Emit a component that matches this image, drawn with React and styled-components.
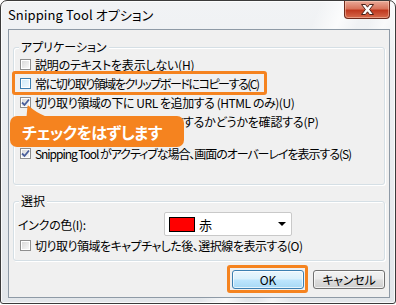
import React from 'react';
import styled, {createGlobalStyle, css} from 'styled-components';

const ORANGE = '#f5831f';

const GlobalStyle = createGlobalStyle`
  html, body {
    margin: 0;
    padding: 0;
    width: 396px;
    height: 305px;
    overflow: hidden;
    background: #ffffff;
  }
  body {
    font-family: "Noto Sans CJK JP", "Noto Sans", sans-serif;
    font-feature-settings: "palt";
    font-size: 12px;
    color: #000;
  }
`;

const Window = styled.div`
  box-sizing: border-box;
  width: 396px;
  height: 304px;
  border: 1px solid #3b3b3b;
  border-radius: 7px 7px 3px 3px;
  display: flex;
  flex-direction: column;
  background:
    linear-gradient(112deg, transparent 62%, rgba(255, 255, 255, 0.75) 67%, transparent 71%, transparent 73%, rgba(255, 255, 255, 0.6) 76%, transparent 80%),
    linear-gradient(#f1f3f5, #e2e6ea);
  box-shadow: inset 0 0 0 1px rgba(255, 255, 255, 0.8);
`;

const TitleBar = styled.div`
  height: 28px;
  display: flex;
  justify-content: space-between;
  align-items: flex-start;
  padding-left: 7px;
`;

const Title = styled.div`
  line-height: 28px;
  font-size: 13px;
  letter-spacing: 0.1px;
`;

const CloseButton = styled.div`
  width: 46px;
  height: 18px;
  margin-right: 5px;
  box-sizing: border-box;
  border: 1px solid #6e2a1c;
  border-top: none;
  border-radius: 0 0 4px 4px;
  background: linear-gradient(#e9a998 0%, #d8745c 45%, #c0391f 55%, #d66a4c 100%);
  box-shadow: inset 0 0 0 1px rgba(255, 220, 200, 0.45);
  display: flex;
  align-items: center;
  justify-content: center;
`;

const Client = styled.div`
  flex: 1;
  margin: 0 5px 5px 7px;
  border: 1px solid #8e9aa6;
  background: #f0f0f0;
  display: flex;
  flex-direction: column;
`;

const Group = styled.div`
  position: relative;
  box-sizing: border-box;
  height: ${p => p.$h}px;
  margin: ${p => p.$top}px 4px 0 4px;
  border: 1px solid #d5dfe5;
  border-radius: 3px;
  box-shadow: inset 1px 1px 0 #fff, 1px 1px 0 #fff;
  padding-top: ${p => p.$pad}px;
`;

const GroupLabel = styled.span`
  position: absolute;
  top: -9px;
  left: 5px;
  padding: 0 2px;
  background: #f0f0f0;
  line-height: 16px;
`;

const Row = styled.label`
  position: relative;
  display: flex;
  align-items: center;
  gap: 3px;
  height: ${p => p.$h || 19}px;
  margin-top: ${p => p.$gap || 0}px;
  padding-left: 6px;
  white-space: nowrap;
  letter-spacing: ${p => (p.$ls != null ? p.$ls : -0.2)}px;
  ${p =>
    p.$highlight &&
    css`
      &::after {
        content: '';
        position: absolute;
        left: -2px;
        top: -3px;
        width: 255px;
        bottom: -2px;
        box-sizing: border-box;
        border: 3px solid ${ORANGE};
        border-radius: 3px;
      }
    `}
`;

const Box = styled.span`
  box-sizing: border-box;
  width: 11px;
  height: 11px;
  flex: none;
  margin-right: 1px;
  border: 1px solid ${p => (p.$hover ? '#3c7fb1' : '#8f8f8f')};
  background: ${p =>
    p.$hover ? 'linear-gradient(135deg, #cde9f8, #f2faff)' : 'linear-gradient(135deg, #d6d6d6, #fbfbfb)'};
  box-shadow: inset 0 0 0 1px #fff;
  display: flex;
  align-items: center;
  justify-content: center;
`;

const Check = ({checked, hover}) => (
  <Box $hover={hover}>
    {checked && (
      <svg width="9" height="9" viewBox="0 0 9 9">
        <path d="M1 4.5 L3.5 7 L8 1.5" fill="none" stroke="#4a5f9b" strokeWidth="1.8" />
      </svg>
    )}
  </Box>
);

const Callout = styled.div`
  position: absolute;
  left: -4px;
  top: 68px;
  width: 174px;
  height: 31px;
  border-radius: 7px;
  background: ${ORANGE};
  color: #fff;
  font-weight: 700;
  font-size: 16px;
  letter-spacing: -0.6px;
  display: flex;
  align-items: center;
  padding-left: 12px;
  box-sizing: border-box;
  z-index: 2;
`;

const CalloutTail = styled.svg`
  position: absolute;
  left: 16px;
  top: -11px;
`;

const InkRow = styled.div`
  display: flex;
  align-items: center;
  height: 24px;
  margin-top: 10px;
  padding-left: 4px;
`;

const InkLabel = styled.span`
  width: 146px;
  letter-spacing: -0.3px;
`;

const Select = styled.div`
  box-sizing: border-box;
  width: 128px;
  height: 24px;
  border: 1px solid #c9c9c9;
  border-radius: 2px;
  background: #fff;
  display: flex;
  align-items: center;
  padding: 0 5px 0 4px;
  gap: 4px;
`;

const Swatch = styled.span`
  box-sizing: border-box;
  width: 26px;
  height: 15px;
  background: ${p => p.$color};
  border: 1px solid #000;
`;

const SelectText = styled.span`
  flex: 1;
  font-size: 13px;
`;

const Arrow = styled.span`
  width: 0;
  height: 0;
  border-left: 4px solid transparent;
  border-right: 4px solid transparent;
  border-top: 4px solid #000;
`;

const ButtonRow = styled.div`
  display: flex;
  justify-content: flex-end;
  gap: 9px;
  margin-top: 9px;
  padding-right: 4px;
`;

const Button = styled.div`
  position: relative;
  box-sizing: border-box;
  width: 72px;
  height: 19px;
  border-radius: 3px;
  display: flex;
  align-items: center;
  justify-content: center;
  letter-spacing: -0.2px;
  border: 1px solid ${p => (p.$primary ? '#3c7fb1' : '#707070')};
  background: ${p =>
    p.$primary
      ? 'linear-gradient(#eaf6fd 0%, #d9f0fc 48%, #bee6fd 52%, #a7d9f5 100%)'
      : 'linear-gradient(#f2f2f2 0%, #ebebeb 48%, #dddddd 52%, #cfcfcf 100%)'};
  box-shadow: inset 0 0 0 1px rgba(255, 255, 255, 0.7);
  ${p =>
    p.$highlight &&
    css`
      &::after {
        content: '';
        position: absolute;
        left: -6px;
        right: -5px;
        top: -6px;
        bottom: -5px;
        border: 3px solid ${ORANGE};
        border-radius: 3px;
      }
    `}
`;

export default function App() {
  return (
    <>
      <GlobalStyle />
      <Window>
        <TitleBar>
          <Title>Snipping Tool オプション</Title>
          <CloseButton>
            <svg width="15" height="11" viewBox="0 0 15 11">
              <path
                d="M1.5 0.5 H5.5 L7.5 3.2 L9.5 0.5 H13.5 L9.6 5.5 L13.5 10.5 H9.5 L7.5 7.8 L5.5 10.5 H1.5 L5.4 5.5 Z"
                fill="#fff"
                stroke="#4a2118"
                strokeWidth="1"
              />
            </svg>
          </CloseButton>
        </TitleBar>
        <Client>
          <Group $top={17} $h={138} $pad={7}>
            <GroupLabel>アプリケーション</GroupLabel>
            <Row>
              <Check />
              説明のテキストを表示しない(H)
            </Row>
            <Row $highlight $ls={-1.45}>
              <Check hover />
              常に切り取り領域をクリップボードにコピーする(C)
            </Row>
            <Row $ls={-0.45}>
              <Check checked />
              切り取り領域の下に URL を追加する (HTML のみ)(U)
            </Row>
            <Row>
              <Check checked />
              終了前に切り取り領域を保存するかどうかを確認する(P)
            </Row>
            <Row $gap={13} $ls={-1.05}>
              <Check checked />
              Snipping Tool がアクティブな場合、画面のオーバーレイを表示する(S)
            </Row>
            <Callout>
              <CalloutTail width="21" height="12" viewBox="0 0 21 12">
                <path d="M0.5 12 L1.5 1 Q2 0 3 1 Q9 7 21 12 Z" fill={ORANGE} />
              </CalloutTail>
              チェックをはずします
            </Callout>
          </Group>
          <Group $top={16} $h={60} $pad={0}>
            <GroupLabel>選択</GroupLabel>
            <InkRow>
              <InkLabel>インクの色(I):</InkLabel>
              <Select>
                <Swatch $color="#ff0000" />
                <SelectText>赤</SelectText>
                <Arrow />
              </Select>
            </InkRow>
            <Row $h={18} $ls={-0.5}>
              <Check />
              切り取り領域をキャプチャした後、選択線を表示する(O)
            </Row>
          </Group>
          <ButtonRow>
            <Button $primary $highlight>OK</Button>
            <Button>キャンセル</Button>
          </ButtonRow>
        </Client>
      </Window>
    </>
  );
}
